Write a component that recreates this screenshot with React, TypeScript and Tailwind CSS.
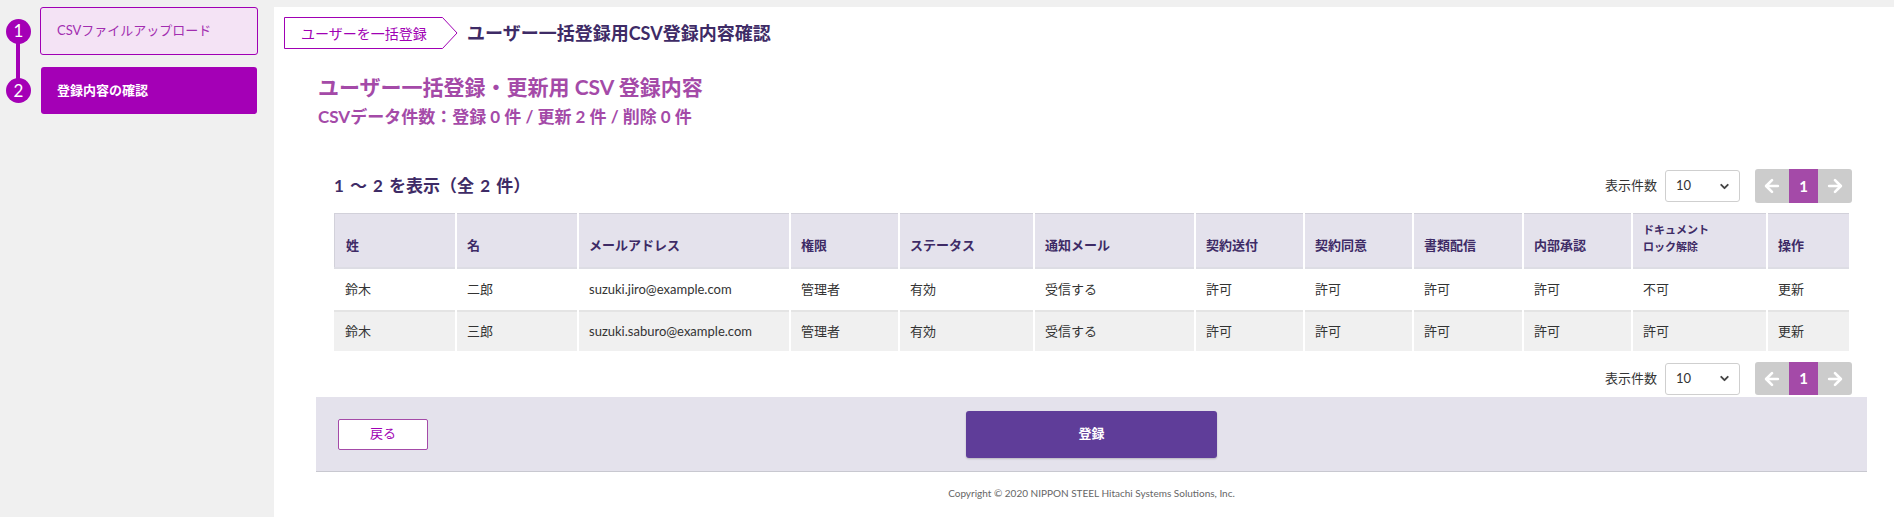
import React from "react";
import { ArrowLeft, ArrowRight, ChevronDown } from "lucide-react";

const FONT = { fontFamily: 'Lato, "Noto Sans CJK JP", "Noto Sans", sans-serif' };

const headers: { label: React.ReactNode; small?: boolean }[] = [
  { label: "姓" },
  { label: "名" },
  { label: "メールアドレス" },
  { label: "権限" },
  { label: "ステータス" },
  { label: "通知メール" },
  { label: "契約送付" },
  { label: "契約同意" },
  { label: "書類配信" },
  { label: "内部承認" },
  {
    label: (
      <>
        ドキュメント
        <br />
        ロック解除
      </>
    ),
    small: true,
  },
  { label: "操作" },
];

const rows = [
  ["鈴木", "二郎", "suzuki.jiro@example.com", "管理者", "有効", "受信する", "許可", "許可", "許可", "許可", "不可", "更新"],
  ["鈴木", "三郎", "suzuki.saburo@example.com", "管理者", "有効", "受信する", "許可", "許可", "許可", "許可", "許可", "更新"],
];

function Controls({ tall }: { tall?: boolean }) {
  return (
    <div className="-mr-[3px] flex items-center gap-[8px]">
      <span className="text-[13px] text-[#333]">表示件数</span>
      <div className="flex h-[32px] w-[75px] items-center justify-between rounded-[3px] border border-[#cfcfcf] bg-white pl-[10px] pr-[8px]">
        <span className="text-[13px] text-[#333]">10</span>
        <ChevronDown size={13} strokeWidth={3.5} className="text-[#444]" />
      </div>
      <div
        className={`ml-[7px] flex overflow-hidden rounded-[3px] bg-[#cccccc] ${tall ? "h-[34px]" : "h-[33px]"}`}
      >
        <div className="flex w-[34px] items-center justify-center">
          <ArrowLeft size={20} strokeWidth={3.2} className="text-white" />
        </div>
        <div className="flex w-[29px] items-center justify-center bg-[#a44aa8] text-[15px] font-bold text-white">
          1
        </div>
        <div className="flex w-[34px] items-center justify-center">
          <ArrowRight size={20} strokeWidth={3.2} className="text-white" />
        </div>
      </div>
    </div>
  );
}

export default function App() {
  return (
    <div className="flex min-h-[517px] w-[1894px] bg-[#f0f0f0] pt-[7px]" style={FONT}>
      {/* Sidebar */}
      <div className="relative w-[274px] shrink-0">
        <div className="absolute left-[16px] top-[32px] h-[57px] w-[4px] bg-[#a400b6]" />
        <div className="flex flex-col gap-[12px]">
          <div className="flex items-center">
            <div className="relative z-10 ml-[6px] flex h-[25px] w-[25px] items-center justify-center rounded-full bg-[#a400b6] text-[17px] text-white">
              1
            </div>
            <div className="ml-[9px] flex h-[48px] w-[218px] items-center rounded-[3px] border border-[#a000b4] bg-[#f4e3f5] pl-[16px] text-[13px] text-[#a22db0]">
              CSVファイルアップロード
            </div>
          </div>
          <div className="flex items-center">
            <div className="relative z-10 ml-[6px] flex h-[25px] w-[25px] items-center justify-center rounded-full bg-[#a400b6] text-[17px] text-white">
              2
            </div>
            <div className="ml-[10px] flex h-[47px] w-[216px] items-center rounded-[3px] bg-[#a400b6] pl-[16px] text-[13px] font-bold text-white">
              登録内容の確認
            </div>
          </div>
        </div>
      </div>

      {/* Main */}
      <div className="flex-1 bg-white px-[10px] pt-[10px]">
        {/* Breadcrumb */}
        <div className="flex items-center">
          <div className="relative flex h-[32px] w-[174px] items-center">
            <svg className="absolute inset-0" width="174" height="32" viewBox="0 0 174 32">
              <polygon
                points="0.5,0.5 158.5,0.5 173,16 158.5,31.5 0.5,31.5"
                fill="white"
                stroke="#a000b4"
                strokeWidth="1"
              />
            </svg>
            <span className="relative pl-[17px] text-[14px] text-[#a000b4]">ユーザーを一括登録</span>
          </div>
          <div className="ml-[9px] text-[18px] font-bold text-[#3e2b66]">ユーザー一括登録用CSV登録内容確認</div>
        </div>

        <div className="ml-[32px] w-[1551px]">
          <div className="mt-[23px] pl-[2px] text-[21px] font-bold leading-[30px] text-[#a44aa8]">
            ユーザー一括登録・更新用 CSV 登録内容
          </div>
          <div className="mt-[3px] pl-[2px] text-[17px] font-bold leading-[24px] text-[#a44aa8]">
            CSVデータ件数：登録 0 件 / 更新 2 件 / 削除 0 件
          </div>

          <div className="px-[18px]">
            <div className="mt-[40px] flex h-[34px] items-center justify-between">
              <div className="text-[17px] font-bold text-[#3e2b66] [word-spacing:2px]">1 ～ 2 を表示（全 2 件）</div>
              <Controls tall />
            </div>

            <div className="mt-[10px] grid grid-cols-[121px_120px_210px_107px_133px_159px_107px_107px_108px_107px_133px_81px] gap-x-[2px]">
              {headers.map((h, i) => (
                <div
                  key={i}
                  className={`flex h-[54px] items-end border-t border-[#d2d1da] bg-[#e4e2ec] pl-[10px] font-bold text-[#3e2b66] ${
                    i === 0 ? "border-l pl-[11px]" : ""
                  } ${h.small ? "pb-[12px] text-[11px] leading-[17px]" : "pb-[12px] text-[13px] leading-[20px]"}`}
                >
                  <div>{h.label}</div>
                </div>
              ))}
              {rows.map((r, ri) =>
                r.map((c, ci) => (
                  <div
                    key={`${ri}-${ci}`}
                    className={`flex items-center border-t-2 text-[13px] text-[#333] ${
                      ci === 0 ? "pl-[11px]" : "pl-[10px]"
                    } ${ri === 0 ? "h-[43px] border-[#dddde4] bg-white" : "h-[41px] border-[#e4e4e4] bg-[#f0f0f0]"}`}
                  >
                    {c}
                  </div>
                ))
              )}
            </div>

            <div className="mt-[11px] flex justify-end">
              <Controls />
            </div>
          </div>

          <div className="mt-[2px] grid h-[75px] grid-cols-[1fr_auto_1fr] items-center border-b border-[#c8c8d0] bg-[#e4e2ec]">
            <div className="pl-[22px]">
              <button className="flex h-[31px] w-[90px] items-center justify-center rounded-[2px] border border-[#a44aa8] bg-white text-[13px] text-[#a000b4]">
                戻る
              </button>
            </div>
            <button className="flex h-[47px] w-[251px] items-center justify-center rounded-[3px] bg-[#5f3d99] text-[13px] font-bold text-white shadow-[0_1px_2px_rgba(0,0,0,0.2)]">
              登録
            </button>
            <div />
          </div>

          <div className="mt-[14px] text-center text-[10px] leading-[14px] text-[#666]">
            Copyright © 2020 NIPPON STEEL Hitachi Systems Solutions, Inc.
          </div>
        </div>
      </div>
    </div>
  );
}
